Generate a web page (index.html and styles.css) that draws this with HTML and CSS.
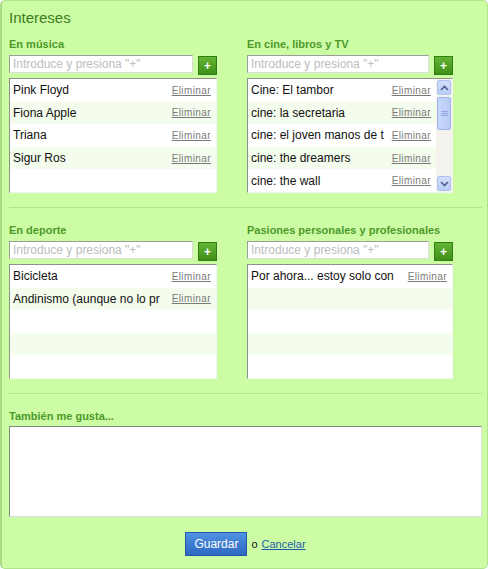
FILE: index.html
```html
<!DOCTYPE html>
<html lang="es">
<head>
<meta charset="utf-8">
<title>Intereses</title>
<link rel="stylesheet" href="styles.css">
</head>
<body>
<div class="panel">
  <h1 class="title">Intereses</h1>

  <div class="grid">
    <div class="section">
      <div class="label">En música</div>
      <div class="add-row">
        <input class="field" type="text" placeholder="Introduce y presiona &quot;+&quot;">
        <button class="plus" type="button">+</button>
      </div>
      <div class="list">
        <div class="rows">
          <div class="row"><span class="item">Pink Floyd</span><a class="del" href="#">Eliminar</a></div>
          <div class="row"><span class="item">Fiona Apple</span><a class="del" href="#">Eliminar</a></div>
          <div class="row"><span class="item">Triana</span><a class="del" href="#">Eliminar</a></div>
          <div class="row"><span class="item">Sigur Ros</span><a class="del" href="#">Eliminar</a></div>
          <div class="row"></div>
        </div>
      </div>
    </div>

    <div class="section">
      <div class="label">En cine, libros y TV</div>
      <div class="add-row">
        <input class="field" type="text" placeholder="Introduce y presiona &quot;+&quot;">
        <button class="plus" type="button">+</button>
      </div>
      <div class="list">
        <div class="rows">
          <div class="row"><span class="item">Cine: El tambor</span><a class="del" href="#">Eliminar</a></div>
          <div class="row"><span class="item">cine: la secretaria</span><a class="del" href="#">Eliminar</a></div>
          <div class="row"><span class="item">cine: el joven manos de t</span><a class="del" href="#">Eliminar</a></div>
          <div class="row"><span class="item">cine: the dreamers</span><a class="del" href="#">Eliminar</a></div>
          <div class="row"><span class="item">cine: the wall</span><a class="del" href="#">Eliminar</a></div>
        </div>
        <div class="scrollbar">
          <div class="sb-btn">
            <svg width="9" height="6" viewBox="0 0 9 6"><path d="M1 5 L4.5 1.5 L8 5" fill="none" stroke="#4b5f8c" stroke-width="1.6"/></svg>
          </div>
          <div class="sb-track">
            <div class="sb-thumb">
              <svg width="7" height="7" viewBox="0 0 7 7"><path d="M0 1.5H7M0 3.5H7M0 5.5H7" stroke="#8ea6de" stroke-width="1"/></svg>
            </div>
          </div>
          <div class="sb-btn">
            <svg width="9" height="6" viewBox="0 0 9 6"><path d="M1 1 L4.5 4.5 L8 1" fill="none" stroke="#4b5f8c" stroke-width="1.6"/></svg>
          </div>
        </div>
      </div>
    </div>
  </div>

  <div class="sep"></div>

  <div class="grid">
    <div class="section">
      <div class="label">En deporte</div>
      <div class="add-row">
        <input class="field" type="text" placeholder="Introduce y presiona &quot;+&quot;">
        <button class="plus" type="button">+</button>
      </div>
      <div class="list">
        <div class="rows">
          <div class="row"><span class="item">Bicicleta</span><a class="del" href="#">Eliminar</a></div>
          <div class="row"><span class="item">Andinismo (aunque no lo pr</span><a class="del" href="#">Eliminar</a></div>
          <div class="row"></div>
          <div class="row"></div>
          <div class="row"></div>
        </div>
      </div>
    </div>

    <div class="section">
      <div class="label">Pasiones personales y profesionales</div>
      <div class="add-row">
        <input class="field" type="text" placeholder="Introduce y presiona &quot;+&quot;">
        <button class="plus" type="button">+</button>
      </div>
      <div class="list">
        <div class="rows">
          <div class="row"><span class="item">Por ahora... estoy solo con</span><a class="del" href="#">Eliminar</a></div>
          <div class="row"></div>
          <div class="row"></div>
          <div class="row"></div>
          <div class="row"></div>
        </div>
      </div>
    </div>
  </div>

  <div class="sep"></div>

  <div class="label">También me gusta...</div>
  <textarea class="area"></textarea>

  <div class="actions">
    <button class="save" type="button">Guardar</button>
    <span class="or">o</span>
    <a class="cancel" href="#">Cancelar</a>
  </div>
</div>
</body>
</html>
```

FILE: styles.css
```css
* { box-sizing: border-box; }

html, body {
  margin: 0;
  padding: 0;
  background: #ffffff;
}

body {
  font-family: "Liberation Sans", Arial, sans-serif;
  color: #111;
}

.panel {
  width: 488px;
  height: 569px;
  background: #ccfca4;
  border: 1px solid #b2e38c;
  border-left: 2px solid #a9d985;
  border-radius: 5px;
  padding: 0 5px 0 7px;
}

.title {
  margin: 7px 0 0 0;
  font-size: 15px;
  line-height: 20px;
  font-weight: normal;
  color: #3b7d1d;
}

.grid {
  display: grid;
  grid-template-columns: 208px 206px;
  column-gap: 30px;
  margin-top: 9px;
}

.sep + .grid { margin-top: 15px; }

.label {
  font-size: 11px;
  line-height: 14px;
  font-weight: bold;
  color: #4d9a2b;
}

.sep + .label { margin-top: 15px; }

.add-row {
  display: flex;
  align-items: flex-start;
  gap: 5px;
  margin-top: 4px;
  height: 20px;
}

.field {
  flex: 1;
  min-width: 0;
  height: 18px;
  margin: 0;
  padding: 0 3px;
  border: 1px solid;
  border-color: #9c9c9c #dcdcdc #dcdcdc #9c9c9c;
  background: #fff;
  font-family: "Liberation Sans", Arial, sans-serif;
  font-size: 12px;
  color: #333;
}

.field::placeholder { color: #bdbdbd; }

.plus {
  width: 19px;
  height: 19px;
  margin: 1px 0 0 0;
  padding: 0;
  border: 1px solid #2f7e12;
  background: linear-gradient(#63b434, #3f9018);
  color: #fff;
  font-family: "Liberation Sans", Arial, sans-serif;
  font-size: 12px;
  font-weight: bold;
  line-height: 16px;
  text-align: center;
}

.list {
  display: flex;
  height: 115px;
  margin-top: 3px;
  border: 1px solid;
  border-color: #8f8f8f #f2f2f2 #f2f2f2 #8f8f8f;
  background: #fff;
  overflow: hidden;
}

.rows {
  flex: 1;
  min-width: 0;
}

.row {
  display: flex;
  align-items: center;
  height: 22.6px;
  padding: 0 5px 0 3px;
  gap: 4px;
}

.row:nth-child(even) { background: #f3fced; }

.item {
  flex: 1;
  min-width: 0;
  overflow: hidden;
  white-space: nowrap;
  font-size: 12px;
  color: #111;
}

.del {
  flex: none;
  font-size: 10px;
  letter-spacing: 0.4px;
  color: #7a7a7a;
  text-decoration: underline;
}

.scrollbar {
  flex: none;
  width: 16px;
  display: flex;
  flex-direction: column;
  background: #f4f3ee;
}

.sb-btn {
  height: 15px;
  margin: 1px 1px;
  display: flex;
  align-items: center;
  justify-content: center;
  background: linear-gradient(#d3defd, #bccdf8);
  border: 1px solid #aec0ec;
  border-radius: 2px;
}

.sb-track {
  flex: 1;
  padding: 1px 1px 0 1px;
}

.sb-thumb {
  height: 33px;
  display: flex;
  align-items: center;
  justify-content: center;
  background: linear-gradient(90deg, #c9d8fc, #b8cbf6);
  border: 1px solid #9fb3e6;
  border-radius: 2px;
}

.sep {
  height: 1px;
  background: #b3e48d;
  margin-top: 14px;
}

.area {
  display: block;
  width: 473px;
  height: 91px;
  margin: 3px 0 0 0;
  border: 1px solid;
  border-color: #7f8c7a #dcdcdc #dcdcdc #7f8c7a;
  background: #fff;
  resize: none;
  font-family: "Liberation Sans", Arial, sans-serif;
}

.actions {
  display: flex;
  justify-content: center;
  align-items: center;
  gap: 4px;
  margin-top: 15px;
}

.save {
  width: 62px;
  height: 24px;
  margin: 0;
  padding: 0;
  border: 1px solid #2357a8;
  background: linear-gradient(#4f92e2, #2d68c2);
  color: #fff;
  font-family: "Liberation Sans", Arial, sans-serif;
  font-size: 12px;
}

.or {
  font-size: 11px;
  color: #111;
}

.cancel {
  font-size: 11px;
  color: #1b5cae;
  text-decoration: underline;
}
```
